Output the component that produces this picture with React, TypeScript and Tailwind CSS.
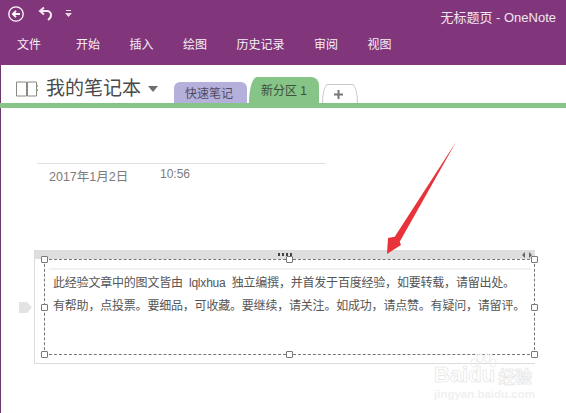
const SANS = "font-['Liberation_Sans','Noto_Sans_CJK_SC',sans-serif]";

const MENU = ["开始", "插入", "绘图", "历史记录", "审阅", "视图"];

function Handle({ className }: { className: string }) {
  return <span className={`absolute h-[7px] w-[7px] rounded-[1px] border border-[#777] bg-white ${className}`} />;
}

function TitleBar() {
  return (
    <div className="flex h-[28px] items-center justify-between pl-[8px] pr-[10px]">
      <div className="flex items-center">
        <svg width="16" height="16" viewBox="0 0 16 16" fill="none" stroke="#fff" strokeWidth="1.3">
          <circle cx="8" cy="8" r="7.2" />
          <path d="M12 8H5M8 4.8 4.8 8 8 11.2" strokeWidth="1.8" />
        </svg>
        <svg className="ml-[14px]" width="16" height="16" viewBox="0 0 16 16" fill="none" stroke="#f3e9f2" strokeWidth="2">
          <path d="M6 1.5 2 5l4 3.5" />
          <path d="M2.5 5H9a4 4 0 0 1 4 4c0 2.5-1.5 4-3 5" />
        </svg>
        <svg className="ml-[11px]" width="7" height="8" viewBox="0 0 7 8" fill="#e8d9e6">
          <rect x="1" y="0" width="5" height="1" />
          <path d="M0 3h7L3.500 7z" />
        </svg>
      </div>
      <span className="pt-[6px] text-[13px] leading-none text-[#f0e6ef]">无标题页 - OneNote</span>
    </div>
  );
}

function Ribbon() {
  return (
    <div className="flex h-[37px] items-center pb-[3px] pl-[17px] text-[12px] text-[#f7eff6]">
      <span className="mr-[35px]">文件</span>
      <div className="flex gap-[29.5px]">
        {MENU.map((m) => (
          <span key={m}>{m}</span>
        ))}
      </div>
    </div>
  );
}

function NotebookBar() {
  return (
    <div className="h-[43px]">
      <div className="flex h-[38px] items-end pl-[16px]">
        <div className="flex h-[38px] items-center">
          <svg width="22" height="18" viewBox="0 0 22 18" fill="none" className="mt-[9px]">
            <path d="M.5 2h10v14H.5zM11.500 2h9v14h-9z" stroke="#8a8a80" strokeWidth="1" />
            <path d="M21 5v2M21 9v2" stroke="#7a9a70" strokeWidth="1.500" />
          </svg>
          <span className="ml-[8px] mt-[8px] text-[19px] leading-none text-[#4a4a4a]">我的笔记本</span>
          <svg className="ml-[7px] mt-[10px]" width="10" height="6" viewBox="0 0 10 6" fill="#6e6e6e">
            <path d="M0 0h10L5 6z" />
          </svg>
        </div>
        <div className="ml-[16px] flex h-[21px] w-[73px] items-center justify-center rounded-t-[6px] bg-[#b5afdc] pr-[3px] pt-[2px] text-[12px] text-[#4e4b5e]">
          快速笔记
        </div>
        <div className="ml-[2px] flex h-[26px] w-[70px] items-center justify-center rounded-tl-[8px_26px] rounded-tr-[8px] bg-[#86c487] pt-[1px] text-[12px] text-[#3e4f3e]">
          新分区 1
        </div>
        <div className="ml-[3px] flex h-[19px] w-[36px] items-center justify-center rounded-tl-[6px_19px] rounded-tr-[6px_19px] border border-b-0 border-[#c8c8c8] bg-white pr-[3px]">
          <svg width="9" height="9" viewBox="0 0 9 9" fill="#777">
            <path d="M3.500 0h2v3.500H9v2H5.500V9h-2V5.500H0v-2h3.500z" />
          </svg>
        </div>
      </div>
      <div className="h-[5px] bg-[#86c487]" />
    </div>
  );
}

function PageTitle() {
  return (
    <div className="ml-[37px] mt-[55px] w-[289px] border-t border-[#e0e0e0]">
      <div className="flex text-[12px] leading-none text-[#7c7c7c]">
        <span className="ml-[12px] mt-[7px] w-[111px] text-[12.5px]">2017年1月2日</span>
        <span className="mt-[4px]">10:56</span>
      </div>
    </div>
  );
}

function NoteBox() {
  return (
    <div className="relative ml-[34px] mt-[66px] h-[114px] w-[501px] border-b border-l border-[#dcdcdc]">
      <div className="relative h-[9px] bg-[#dedede]">
        <span className="absolute left-[242px] top-[3px] h-[3px] w-[16px] bg-[radial-gradient(circle,#444_1.2px,transparent_1.2px)] bg-[length:4px_3px]" />
        <svg className="absolute right-[3px] top-[2px]" width="10" height="6" viewBox="0 0 10 6" fill="#666">
          <path d="M3 0v6L0 3zM7 0v6l3-3z" />
        </svg>
      </div>
      <div className="relative ml-[9px] h-[96px] w-[491px] border border-dashed border-[#777]">
        <Handle className="-left-[4px] -top-[4px]" />
        <Handle className="left-[241px] -top-[4px]" />
        <Handle className="-right-[4px] -top-[4px]" />
        <Handle className="-left-[4px] top-[44px]" />
        <Handle className="-right-[4px] top-[44px]" />
        <Handle className="-left-[4px] -bottom-[4px]" />
        <Handle className="left-[241px] -bottom-[4px]" />
        <Handle className="-right-[4px] -bottom-[4px]" />
        <div className="ml-[4px] mt-[8px] h-[2px] w-[482px] bg-[#f1f1f1]" />
        <div className="whitespace-nowrap pl-[8px] pt-[2px] text-[12px] leading-[23px] tracking-[-0.2px] text-[#555] [word-spacing:3px]">
          <p>此经验文章中的图文皆由 lqlxhua 独立编撰，并首发于百度经验，如要转载，请留出处。</p>
          <p>有帮助，点投票。要细品，可收藏。要继续，请关注。如成功，请点赞。有疑问，请留评。</p>
        </div>
      </div>
      <svg className="absolute -left-[16px] top-[52px]" width="13" height="11" viewBox="0 0 13 11" fill="#e3e3e3">
        <path d="M0 0h8l5 5.500-5 5.500H0z" />
      </svg>
    </div>
  );
}

function Arrow() {
  return (
    <svg className="absolute left-[380px] top-[138px]" width="80" height="122" viewBox="0 0 80 122">
      <path d="M76 4 14.700 98.700 8 100 7 116 21 107 19.700 103.700Z" fill="#e8333a" />
    </svg>
  );
}

function Watermark() {
  return (
    <div className="absolute left-[434px] top-[353px] w-[105px] select-none whitespace-nowrap font-bold text-white">
      <svg className="absolute left-[34px] top-0" width="30" height="18" viewBox="0 0 30 18" fill="none" stroke="#efefef" strokeWidth="1.200">
        <ellipse cx="6" cy="10" rx="3" ry="4" />
        <ellipse cx="12" cy="5" rx="3" ry="4" />
        <ellipse cx="19" cy="5" rx="3" ry="4" />
        <ellipse cx="25" cy="10" rx="3" ry="4" />
      </svg>
      <div className="flex items-end pt-[11px] leading-none [-webkit-text-stroke:0.6px_#e2e2e2]">
        <span className="text-[22px]">Baidu</span>
        <span className="ml-[3px] text-[17px]">经验</span>
      </div>
      <div className="mt-[3px] text-[11.5px] leading-none text-[#f0f0f0]">jingyan.baidu.com</div>
    </div>
  );
}

export default function App() {
  return (
    <div className={`relative h-[413px] w-[566px] overflow-hidden bg-white shadow-[inset_1px_0_0_#6b3a68] ${SANS}`}>
      <div className="h-[65px] bg-[#81367b]">
        <TitleBar />
        <Ribbon />
      </div>
      <NotebookBar />
      <PageTitle />
      <NoteBox />
      <Arrow />
      <Watermark />
    </div>
  );
}
